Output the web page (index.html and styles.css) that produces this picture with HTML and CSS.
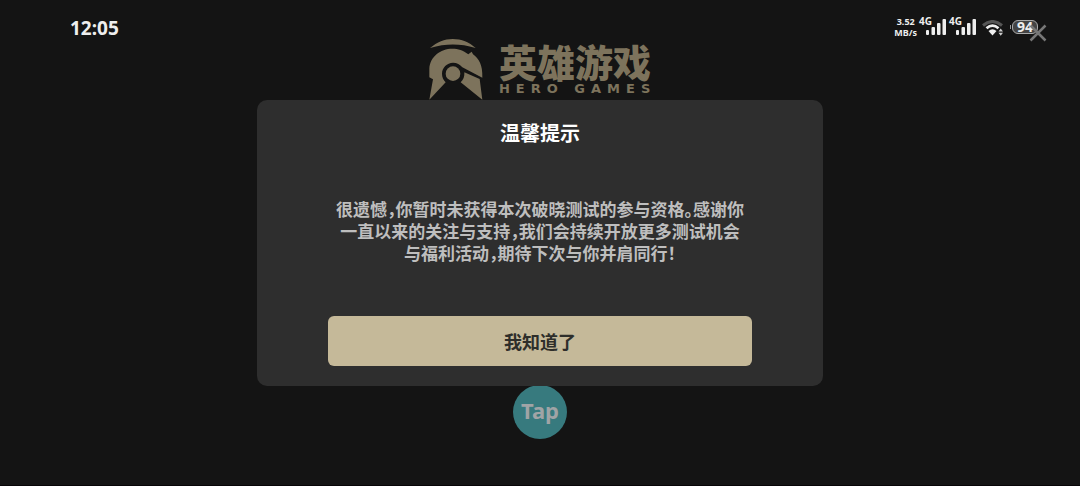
FILE: index.html
```
<!DOCTYPE html>
<html lang="zh-CN">
	<head>
		<meta charset="UTF-8" />
		<meta name="viewport" content="width=device-width, initial-scale=1.0" />
		<title>温馨提示</title>
		<link rel="stylesheet" href="styles.css">
	</head>
	<body>
		<header class="status-bar">
			<time class="clock">12:05</time>
			<div class="status-icons">
				<div class="speed"><span>3.52</span><span>MB/s</span></div>
				<div class="signal">
					<span class="network">4G</span>
					<svg width="20" height="16" viewBox="0 0 20 16" fill="currentColor">
						<rect x="0" y="11" width="3" height="5" rx="1" />
						<rect x="5.500" y="8" width="3.500" height="8" rx="1" />
						<rect x="11" y="4" width="3.500" height="12" rx="1" />
						<rect x="16.500" y="0" width="3.500" height="16" rx="1" />
					</svg>
				</div>
				<div class="signal">
					<span class="network">4G</span>
					<svg width="20" height="16" viewBox="0 0 20 16" fill="currentColor">
						<rect x="0" y="11" width="3" height="5" rx="1" />
						<rect x="5.500" y="8" width="3.500" height="8" rx="1" />
						<rect x="11" y="4" width="3.500" height="12" rx="1" />
						<rect x="16.500" y="0" width="3.500" height="16" rx="1" />
					</svg>
				</div>
				<svg class="wifi" width="22" height="16" viewBox="0 0 22 16">
					<path d="M1 5.500Q10.500 -2.500 20 5.500" fill="none" stroke="#555" stroke-width="3" />
					<path d="M4.500 8.300Q10.500 3 16.500 8.300" fill="none" stroke="#eee" stroke-width="2.800" />
					<path d="M6.500 11Q10.500 7.500 14.500 11L10.500 15.500Z" fill="#eee" />
					<path d="M16.500 11.500L18.700 8.500L21 11.500ZM16.500 12.800L18.700 15.800L21 12.800Z" fill="#ccc" />
				</svg>
				<div class="battery">94</div>
			</div>
			<button class="close" type="button" aria-label="关闭">
				<svg width="18" height="18" viewBox="0 0 18 18" fill="none" stroke="currentColor" stroke-width="2.500">
					<path d="M1.500 1.500L16.500 16.500M16.500 1.500L1.500 16.500" />
				</svg>
			</button>
		</header>

		<main class="login">
			<div class="brand">
				<svg class="helmet" width="54" height="61" viewBox="27 21 160 183" fill="currentColor">
					<path d="M29 48C51 30 72 21 97 21C124 21 146 30 166 48C118 34 78 34 29 48Z" />
					<path d="M27 203L38 142L27 136V110C29 74 60 50 96 50C114 50 128 55 144 67L154 59L158 67C176 81 187 98 186 137L126 106C119 97 110 92 98 92C80 92 65 107 65 125C65 136 69 144 76 151Z" />
					<circle cx="98" cy="125" r="22" />
					<path d="M132 121L178 141L186 203L121 151C129 144 133 133 132 121Z" />
				</svg>
				<div class="brand-text">
					<span class="brand-cn">英雄游戏</span>
					<span class="brand-en">HERO GAMES</span>
				</div>
			</div>
			<button class="tap-login" type="button">Tap</button>
		</main>

		<div class="overlay">
			<section class="dialog" role="dialog" aria-labelledby="dialog-title">
				<h1 id="dialog-title">温馨提示</h1>
				<p>很遗憾，你暂时未获得本次破晓测试的参与资格。感谢你<br>一直以来的关注与支持，我们会持续开放更多测试机会<br>与福利活动，期待下次与你并肩同行！</p>
				<button class="confirm" type="button">我知道了</button>
			</section>
		</div>
	</body>
</html>
```

FILE: styles.css
```
* {
	box-sizing: border-box;
}
body {
	margin: 0;
	min-height: 100vh;
	display: flex;
	flex-direction: column;
	background-color: #141414;
	border-bottom: 1px solid #080508;
	color: #eee;
	font-family: "Noto Sans CJK SC", sans-serif;
}
button {
	border: none;
	padding: 0;
	cursor: pointer;
	font-family: inherit;
}

/* status bar */
.status-bar {
	position: relative;
	display: flex;
	justify-content: space-between;
	align-items: flex-start;
	padding: 16px 42px 0 70px;
	height: 39px;
	font-family: "Noto Sans", sans-serif;
	font-weight: 700;
}
.clock {
	font-size: 19px;
	line-height: 24px;
}
.status-icons {
	display: flex;
	align-items: flex-start;
}
.speed {
	display: flex;
	flex-direction: column;
	align-items: center;
	margin-right: 2px;
	font-size: 9px;
	line-height: 11px;
}
.signal {
	display: flex;
	margin-right: 3px;
}
.signal svg {
	margin: 3px 0 0 -6px;
}
.network {
	font-size: 10px;
	line-height: 11px;
}
.wifi {
	margin: 4px 8px 0 3px;
}
.battery {
	position: relative;
	width: 26px;
	height: 14px;
	margin-top: 4px;
	border: 1px solid #aaa;
	border-radius: 6px;
	background-color: #444;
	font-size: 14px;
	line-height: 12px;
	text-align: center;
}
.battery::before {
	content: "";
	position: absolute;
	top: 4px;
	left: -3px;
	width: 1px;
	height: 4px;
	background-color: #999;
}
.close {
	position: absolute;
	top: 24px;
	right: 33px;
	height: 18px;
	background: none;
	color: #777;
}

/* login page behind the dialog */
.login {
	flex: 1;
	display: flex;
	flex-direction: column;
	justify-content: space-between;
	align-items: center;
	padding-bottom: 46px;
}
.brand {
	display: flex;
	gap: 16px;
	color: #7d735c;
}
.brand-text {
	display: flex;
	flex-direction: column;
	padding-top: 3px;
}
.brand-cn {
	font-size: 38px;
	line-height: 38px;
	font-weight: 900;
}
.brand-en {
	margin-right: -6px;
	font: 700 13px/18px "DejaVu Sans", sans-serif;
	letter-spacing: 6px;
}
.tap-login {
	width: 54px;
	height: 54px;
	padding-bottom: 4px;
	border-radius: 50%;
	background-color: #377a7e;
	color: #a0a4a6;
	font: 700 22px/50px "Noto Sans", sans-serif;
}

/* dialog */
.overlay {
	position: fixed;
	inset: 0;
	display: flex;
	justify-content: center;
	align-items: center;
}
.dialog {
	width: 100%;
	max-width: 566px;
	padding: 18px 71px 20px;
	border-radius: 10px;
	background-color: #2e2e2e;
	text-align: center;
}
.dialog h1 {
	margin: 0 0 50px;
	color: #fff;
	font-size: 20px;
	line-height: 30px;
	font-weight: 700;
}
.dialog p {
	margin: 0 -20px 52px;
	color: #bebebe;
	font-size: 17px;
	line-height: 22px;
	font-weight: 700;
	font-feature-settings: "halt";
}
.confirm {
	width: 100%;
	height: 50px;
	border-radius: 6px;
	background-color: #c5b999;
	color: #2e2e2a;
	font-size: 18px;
	font-weight: 700;
}
```
